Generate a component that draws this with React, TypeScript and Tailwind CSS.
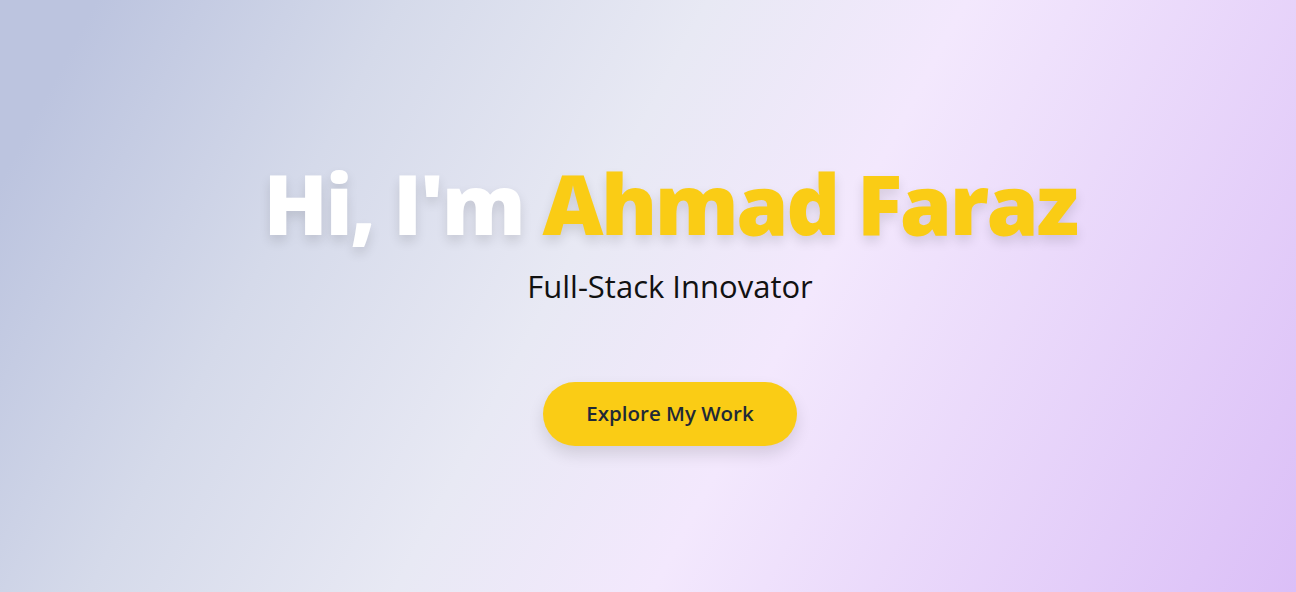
import React from "react";

export default function App() {
  return (
    <div
      className="w-full h-[592px] flex flex-col items-center justify-center pl-[44px] pt-[14px] bg-[linear-gradient(118deg,#bcc4df_6%,#d5daea_25%,#e8e9f4_44%,#f3e8fd_60%,#dbbff7_100%)]"
      style={{ fontFamily: '"Open Sans", "Noto Sans", sans-serif' }}
    >
      <h1 className="text-[84px] leading-none font-extrabold tracking-[-2.5px] text-white [text-shadow:0_6px_12px_rgba(0,0,0,0.12)]">
        Hi, I'm <span className="text-[#facc15]">Ahmad Faraz</span>
      </h1>
      <p className="mt-[26px] text-[31px] leading-none text-[#111] font-normal">
        Full-Stack Innovator
      </p>
      <button className="mt-[80px] h-[64px] px-[43px] rounded-full bg-[#facc15] text-[#1f2937] text-[20.5px] font-semibold shadow-[0_8px_16px_rgba(0,0,0,0.12)]">
        Explore My Work
      </button>
    </div>
  );
}
